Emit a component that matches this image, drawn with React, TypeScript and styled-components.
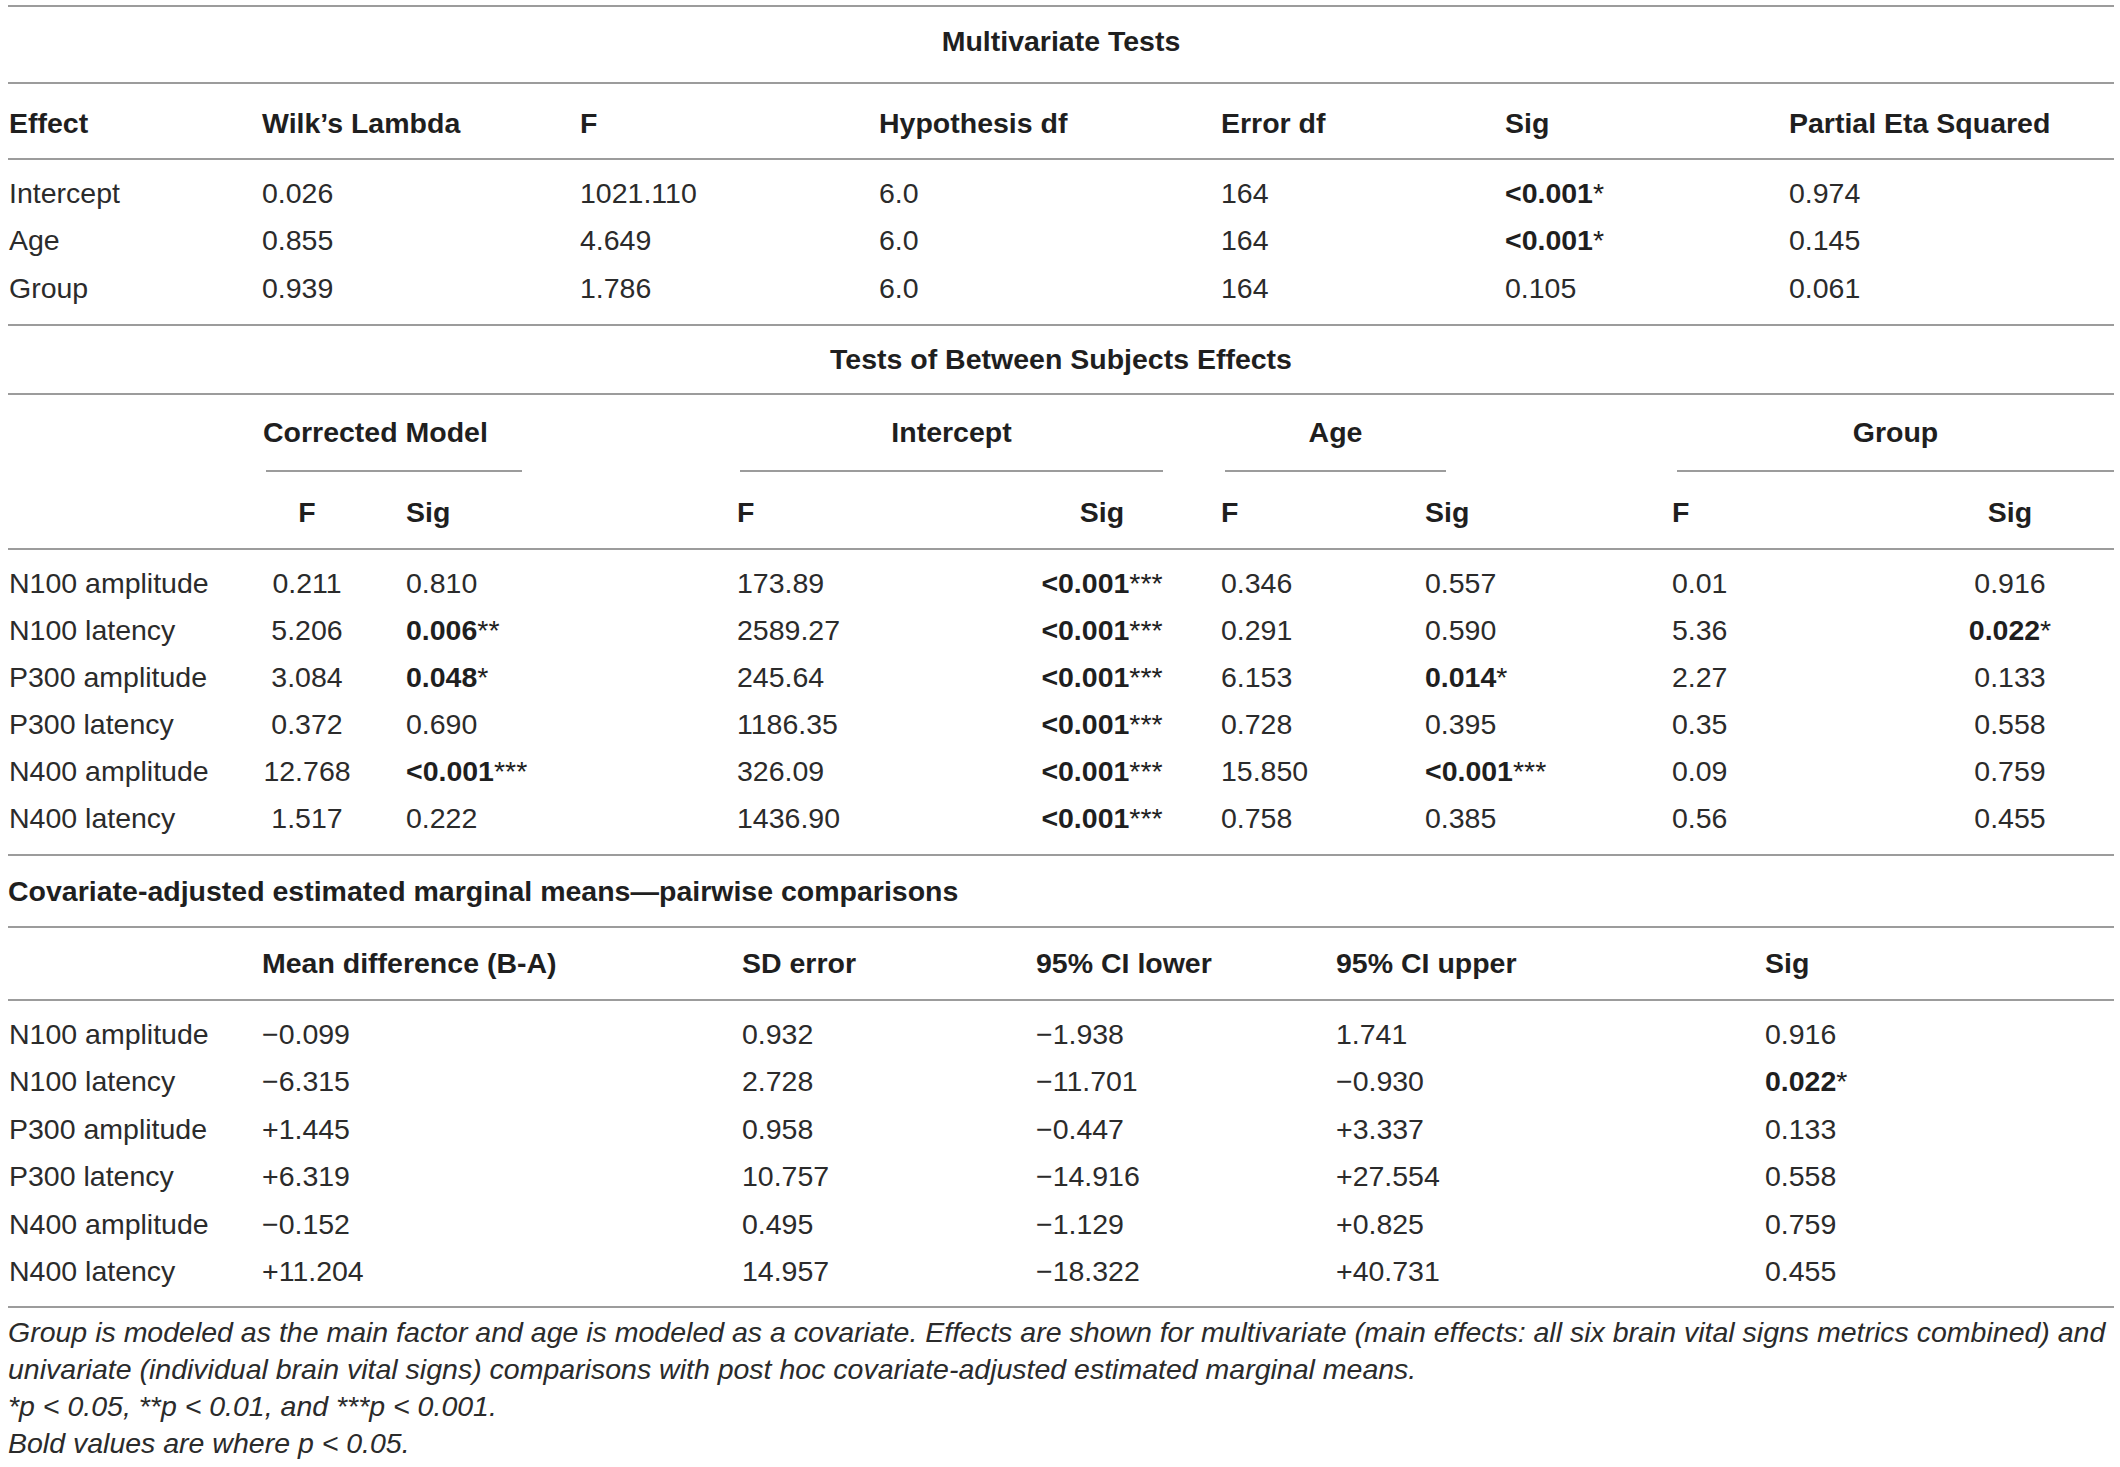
import React from "react";
import styled, { createGlobalStyle } from "styled-components";

const GlobalStyle = createGlobalStyle`
  html, body { margin: 0; padding: 0; background: #ffffff; }
  body {
    font-family: "Liberation Sans", Arial, Helvetica, sans-serif;
    color: #2b2b2b;
  }
`;

const RULE = "2px solid #9c9c9c";

const Page = styled.div`
  width: 2106px;
  padding: 5px 0 0 8px;
  font-size: 28.5px;
  line-height: 1;
`;

const Section = styled.section`
  border-top: ${RULE};
`;

const Caption = styled.div<{ $h: number; $align?: "left" | "center"; $shift?: number }>`
  box-sizing: border-box;
  height: ${(p) => p.$h}px;
  display: flex;
  align-items: center;
  justify-content: ${(p) => (p.$align === "left" ? "flex-start" : "center")};
  padding-bottom: ${(p) => p.$shift ?? 0}px;
  font-weight: 700;
  color: #1f1f1f;
  white-space: nowrap;
`;

const Row = styled.div<{ $cols: string; $h: number }>`
  display: grid;
  grid-template-columns: ${(p) => p.$cols};
  height: ${(p) => p.$h}px;
  align-items: center;
`;

const HeadRow = styled(Row)<{ $rule?: boolean; $pt?: number }>`
  box-sizing: content-box;
  border-top: ${(p) => (p.$rule ? RULE : "none")};
  font-weight: 700;
  color: #1f1f1f;
  padding-top: ${(p) => p.$pt ?? 0}px;
  height: ${(p) => p.$h - (p.$pt ?? 0)}px;
`;

const Body = styled.div<{ $pt: number; $pb: number }>`
  border-top: ${RULE};
  padding-top: ${(p) => p.$pt}px;
  padding-bottom: ${(p) => p.$pb}px;
`;

const Cell = styled.div<{ $center?: boolean; $pl?: number }>`
  text-align: ${(p) => (p.$center ? "center" : "left")};
  padding-left: ${(p) => p.$pl ?? 0}px;
  white-space: nowrap;
`;

const Strong = styled.span`
  font-weight: 700;
  color: #1f1f1f;
`;

const Stars = styled.span`
  font-weight: 400;
`;

const GroupRow = styled.div<{ $cols: string }>`
  display: grid;
  grid-template-columns: ${(p) => p.$cols};
  border-top: ${RULE};
`;

const GroupCell = styled.div<{ $col: string; $ml: number; $w: number }>`
  grid-column: ${(p) => p.$col};
  margin-left: ${(p) => p.$ml}px;
  width: ${(p) => p.$w}px;
`;

const GroupTitle = styled.div<{ $align: "left" | "center"; $ml?: number }>`
  height: 75px;
  display: flex;
  align-items: center;
  justify-content: ${(p) => (p.$align === "left" ? "flex-start" : "center")};
  margin-left: ${(p) => p.$ml ?? 0}px;
  font-weight: 700;
  color: #1f1f1f;
  white-space: nowrap;
`;

const GroupRule = styled.div<{ $ml?: number }>`
  margin-left: ${(p) => p.$ml ?? 0}px;
  border-bottom: ${RULE};
`;

const Notes = styled.div`
  border-top: ${RULE};
  padding-top: 6px;
  font-style: italic;
  line-height: 37px;
  color: #2b2b2b;
`;

const NoteLine = styled.div`
  white-space: nowrap;
`;

const M = "\u2212";

function Val({ v }: { v: string }) {
  const bold = v.startsWith("!");
  const text = bold ? v.slice(1) : v;
  const m = text.match(/^(.*?)(\*+)$/);
  const main = m ? m[1] : text;
  const stars = m ? m[2] : "";
  if (!bold) return <>{text}</>;
  return (
    <Strong>
      {main}
      {stars && <Stars>{stars}</Stars>}
    </Strong>
  );
}

/* ---------- Table 1: Multivariate tests ---------- */
const COLS1 = "254px 318px 299px 342px 284px 284px 325px";
const head1 = ["Effect", "Wilk\u2019s Lambda", "F", "Hypothesis df", "Error df", "Sig", "Partial Eta Squared"];
const rows1 = [
  ["Intercept", "0.026", "1021.110", "6.0", "164", "!<0.001*", "0.974"],
  ["Age", "0.855", "4.649", "6.0", "164", "!<0.001*", "0.145"],
  ["Group", "0.939", "1.786", "6.0", "164", "0.105", "0.061"],
];

/* ---------- Table 2: Between subjects ---------- */
const COLS2 = "254px 90px 385px 293px 144px 251px 247px 268px 140px 34px";
const layout2: { center?: boolean; pl?: number }[] = [
  { pl: 1 },
  { center: true },
  { pl: 54 },
  {},
  { center: true },
  { pl: 47 },
  {},
  {},
  { center: true },
];
const head2 = ["", "F", "Sig", "F", "Sig", "F", "Sig", "F", "Sig"];
const rows2 = [
  ["N100 amplitude", "0.211", "0.810", "173.89", "!<0.001***", "0.346", "0.557", "0.01", "0.916"],
  ["N100 latency", "5.206", "!0.006**", "2589.27", "!<0.001***", "0.291", "0.590", "5.36", "!0.022*"],
  ["P300 amplitude", "3.084", "!0.048*", "245.64", "!<0.001***", "6.153", "!0.014*", "2.27", "0.133"],
  ["P300 latency", "0.372", "0.690", "1186.35", "!<0.001***", "0.728", "0.395", "0.35", "0.558"],
  ["N400 amplitude", "12.768", "!<0.001***", "326.09", "!<0.001***", "15.850", "!<0.001***", "0.09", "0.759"],
  ["N400 latency", "1.517", "0.222", "1436.90", "!<0.001***", "0.758", "0.385", "0.56", "0.455"],
];

/* ---------- Table 3: pairwise comparisons ---------- */
const COLS3 = "254px 480px 294px 300px 429px 349px";
const head3 = ["", "Mean difference (B-A)", "SD error", "95% CI lower", "95% CI upper", "Sig"];
const rows3 = [
  ["N100 amplitude", `${M}0.099`, "0.932", `${M}1.938`, "1.741", "0.916"],
  ["N100 latency", `${M}6.315`, "2.728", `${M}11.701`, `${M}0.930`, "!0.022*"],
  ["P300 amplitude", "+1.445", "0.958", `${M}0.447`, "+3.337", "0.133"],
  ["P300 latency", "+6.319", "10.757", `${M}14.916`, "+27.554", "0.558"],
  ["N400 amplitude", `${M}0.152`, "0.495", `${M}1.129`, "+0.825", "0.759"],
  ["N400 latency", "+11.204", "14.957", `${M}18.322`, "+40.731", "0.455"],
];

export default function App() {
  return (
    <>
      <GlobalStyle />
      <Page>
        <Section>
          <Caption $h={75} $shift={7}>Multivariate Tests</Caption>
          <HeadRow $cols={COLS1} $h={74} $pt={4} $rule>
            {head1.map((h, i) => (
              <Cell key={i} $pl={i === 0 ? 1 : 0}>{h}</Cell>
            ))}
          </HeadRow>
          <Body $pt={9} $pb={12.5}>
            {rows1.map((r, ri) => (
              <Row key={ri} $cols={COLS1} $h={47.5}>
                {r.map((c, ci) => (
                  <Cell key={ci} $pl={ci === 0 ? 1 : 0}>
                    <Val v={c} />
                  </Cell>
                ))}
              </Row>
            ))}
          </Body>
        </Section>

        <Section>
          <Caption $h={67}>Tests of Between Subjects Effects</Caption>
          <GroupRow $cols={COLS2}>
            <GroupCell $col="2 / 4" $ml={1} $w={259}>
              <GroupTitle $align="left">Corrected Model</GroupTitle>
              <GroupRule $ml={3} />
            </GroupCell>
            <GroupCell $col="4 / 6" $ml={3} $w={423}>
              <GroupTitle $align="center">Intercept</GroupTitle>
              <GroupRule />
            </GroupCell>
            <GroupCell $col="6 / 8" $ml={51} $w={221}>
              <GroupTitle $align="center">Age</GroupTitle>
              <GroupRule />
            </GroupCell>
            <GroupCell $col="8 / 11" $ml={5} $w={437}>
              <GroupTitle $align="center">Group</GroupTitle>
              <GroupRule />
            </GroupCell>
          </GroupRow>
          <HeadRow $cols={COLS2} $h={76} $pt={4}>
            {head2.map((h, i) => (
              <Cell key={i} $center={layout2[i].center} $pl={layout2[i].pl}>
                {h}
              </Cell>
            ))}
          </HeadRow>
          <Body $pt={10} $pb={12}>
            {rows2.map((r, ri) => (
              <Row key={ri} $cols={COLS2} $h={47}>
                {r.map((c, ci) => (
                  <Cell key={ci} $center={layout2[ci].center} $pl={layout2[ci].pl}>
                    <Val v={c} />
                  </Cell>
                ))}
              </Row>
            ))}
          </Body>
        </Section>

        <Section>
          <Caption $h={70} $align="left">
            Covariate-adjusted estimated marginal means{"\u2014"}pairwise comparisons
          </Caption>
          <HeadRow $cols={COLS3} $h={71} $rule>
            {head3.map((h, i) => (
              <Cell key={i} $pl={i === 0 ? 1 : 0}>{h}</Cell>
            ))}
          </HeadRow>
          <Body $pt={9} $pb={11}>
            {rows3.map((r, ri) => (
              <Row key={ri} $cols={COLS3} $h={47.5}>
                {r.map((c, ci) => (
                  <Cell key={ci} $pl={ci === 0 ? 1 : 0}>
                    <Val v={c} />
                  </Cell>
                ))}
              </Row>
            ))}
          </Body>
        </Section>

        <Notes>
          <NoteLine>
            Group is modeled as the main factor and age is modeled as a covariate. Effects are shown for multivariate (main effects: all six brain vital signs metrics combined) and
          </NoteLine>
          <NoteLine>
            univariate (individual brain vital signs) comparisons with post hoc covariate-adjusted estimated marginal means.
          </NoteLine>
          <NoteLine>*p &lt; 0.05, **p &lt; 0.01, and ***p &lt; 0.001.</NoteLine>
          <NoteLine>Bold values are where p &lt; 0.05.</NoteLine>
        </Notes>
      </Page>
    </>
  );
}
